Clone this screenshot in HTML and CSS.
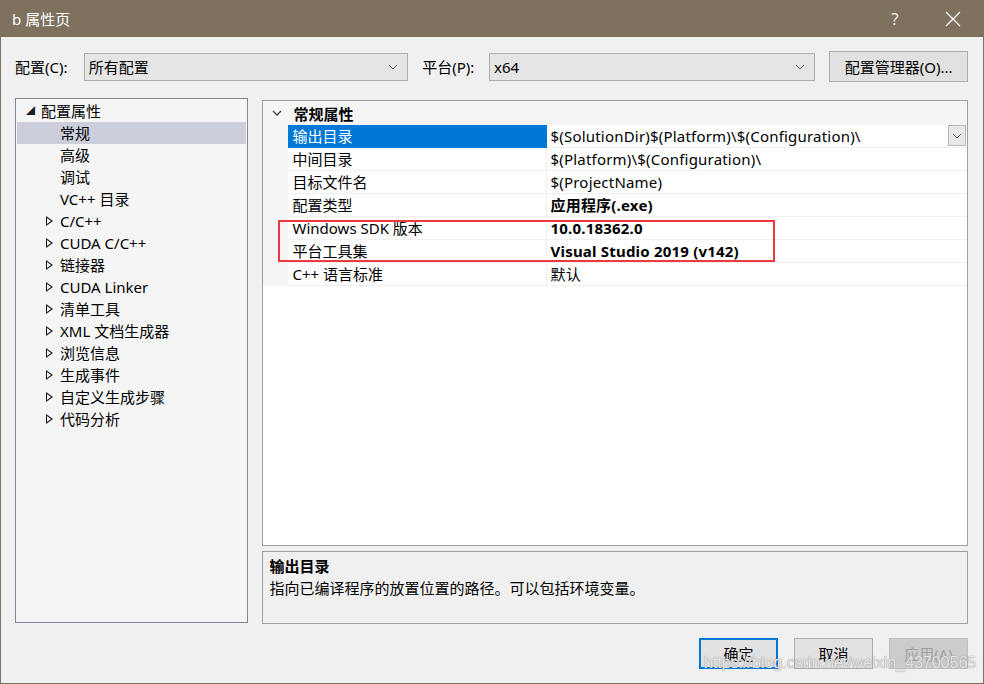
FILE: index.html
```html
<!DOCTYPE html>
<html lang="zh-CN">

<head>
    <meta charset="UTF-8">
    <meta name="viewport" content="width=device-width, initial-scale=1">
    <title>b 属性页</title>

    <link rel="stylesheet" href="styles.css">
</head>

<body>
    <div class="window">
        <div class="titlebar">
            <span class="title">b 属性页</span>
            <span class="title-btn help">?</span>
            <span class="title-btn close">
                <svg width="16" height="16" viewBox="0 0 16 16">
                    <path d="M1 1 L15 15 M15 1 L1 15" stroke="#fff" stroke-width="1.2" fill="none" />
                </svg>
            </span>
        </div>

        <div class="content">
            <div class="config-row">
                <label class="field-label">配置(C):</label>
                <div class="combo combo-config">
                    <span>所有配置</span>
                    <svg class="combo-arrow" width="10" height="6" viewBox="0 0 10 6">
                        <path d="M1 1 L5 5 L9 1" stroke="#606060" fill="none" />
                    </svg>
                </div>
                <label class="field-label platform-label">平台(P):</label>
                <div class="combo combo-platform">
                    <span>x64</span>
                    <svg class="combo-arrow" width="10" height="6" viewBox="0 0 10 6">
                        <path d="M1 1 L5 5 L9 1" stroke="#606060" fill="none" />
                    </svg>
                </div>
                <button class="btn btn-manager">配置管理器(O)...</button>
            </div>

            <div class="main">
                <div class="tree">
                    <div class="tree-item root"><span class="arrow-open">◢</span>配置属性</div>
                    <div class="tree-item leaf selected">常规</div>
                    <div class="tree-item leaf">高级</div>
                    <div class="tree-item leaf">调试</div>
                    <div class="tree-item leaf">VC++ 目录</div>
                    <div class="tree-item node"><span class="arrow-closed"></span>C/C++</div>
                    <div class="tree-item node"><span class="arrow-closed"></span>CUDA C/C++</div>
                    <div class="tree-item node"><span class="arrow-closed"></span>链接器</div>
                    <div class="tree-item node"><span class="arrow-closed"></span>CUDA Linker</div>
                    <div class="tree-item node"><span class="arrow-closed"></span>清单工具</div>
                    <div class="tree-item node"><span class="arrow-closed"></span>XML 文档生成器</div>
                    <div class="tree-item node"><span class="arrow-closed"></span>浏览信息</div>
                    <div class="tree-item node"><span class="arrow-closed"></span>生成事件</div>
                    <div class="tree-item node"><span class="arrow-closed"></span>自定义生成步骤</div>
                    <div class="tree-item node"><span class="arrow-closed"></span>代码分析</div>
                </div>

                <div class="right">
                    <div class="grid">
                        <div class="grid-header">
                            <svg class="chevron" width="10" height="6" viewBox="0 0 10 6">
                                <path d="M1 1 L5 5 L9 1" stroke="#404040" stroke-width="1.3" fill="none" />
                            </svg>
                            <span>常规属性</span>
                        </div>
                        <div class="row selected">
                            <div class="cell-name">输出目录</div>
                            <div class="cell-value">$(SolutionDir)$(Platform)\$(Configuration)\
                                <span class="row-drop">
                                    <svg width="10" height="6" viewBox="0 0 10 6">
                                        <path d="M1 1 L5 5 L9 1" stroke="#606060" fill="none" />
                                    </svg>
                                </span>
                            </div>
                        </div>
                        <div class="row">
                            <div class="cell-name">中间目录</div>
                            <div class="cell-value">$(Platform)\$(Configuration)\</div>
                        </div>
                        <div class="row">
                            <div class="cell-name">目标文件名</div>
                            <div class="cell-value">$(ProjectName)</div>
                        </div>
                        <div class="row">
                            <div class="cell-name">配置类型</div>
                            <div class="cell-value bold">应用程序(.exe)</div>
                        </div>
                        <div class="row">
                            <div class="cell-name">Windows SDK 版本</div>
                            <div class="cell-value bold">10.0.18362.0</div>
                        </div>
                        <div class="row">
                            <div class="cell-name">平台工具集</div>
                            <div class="cell-value bold">Visual Studio 2019 (v142)</div>
                        </div>
                        <div class="row">
                            <div class="cell-name">C++ 语言标准</div>
                            <div class="cell-value">默认</div>
                        </div>

                        <div class="highlight"></div>
                    </div>

                    <div class="desc">
                        <div class="desc-title">输出目录</div>
                        <div class="desc-text">指向已编译程序的放置位置的路径。可以包括环境变量。</div>
                    </div>
                </div>
            </div>

            <div class="buttons">
                <button class="btn btn-dialog default">确定</button>
                <button class="btn btn-dialog">取消</button>
                <button class="btn btn-dialog disabled">应用(A)</button>
            </div>

            <div class="watermark">https://blog.csdn.net/weixin_43700565</div>
        </div>
    </div>
</body>

</html>
```

FILE: styles.css
```css
body {
    margin: 0;
    padding: 0;
    font: 15px "Noto Sans", "Noto Sans CJK SC", sans-serif;
    color: #000;
    background: #f0f0f0;
}

.window {
    position: relative;
    width: 984px;
    height: 684px;
    box-sizing: border-box;
    border: 1px solid #7e715e;
    border-top: none;
    background: #f0f0f0;
    display: flex;
    flex-direction: column;
}

.titlebar {
    height: 37px;
    margin: 0 -1px;
    background: #7e715e;
    color: #fff;
    display: flex;
    align-items: center;
    padding-left: 12px;
    flex-shrink: 0;
}

.title {
    flex: 1;
    font-size: 15px;
    line-height: 20px;
}

.title-btn {
    width: 46px;
    display: flex;
    justify-content: center;
    align-items: center;
}

.help {
    margin-right: 12px;
    font-size: 16px;
    color: #ecebe8;
}

.close {
    margin-right: 8px;
}

.content {
    flex: 1;
    padding: 0 15px 0 14px;
    display: flex;
    flex-direction: column;
}

/* top row */

.config-row {
    display: flex;
    align-items: center;
    height: 31px;
    margin-top: 14px;
}

.field-label {
    line-height: 20px;
    width: 69px;
}

.platform-label {
    margin-left: 14px;
    width: 67px;
}

.combo {
    box-sizing: border-box;
    height: 28px;
    border: 1px solid #adadad;
    background: #e5e5e5;
    display: flex;
    align-items: center;
    padding: 0 9px 0 4px;
    line-height: 20px;
}

.combo span {
    flex: 1;
}

.combo-config {
    width: 325px;
}

.combo-platform {
    width: 327px;
}

.btn {
    font: inherit;
    color: #000;
    box-sizing: border-box;
    border: 1px solid #adadad;
    background: #e1e1e1;
    padding: 0;
    line-height: 20px;
}

.btn-manager {
    width: 139px;
    height: 31px;
    margin-left: 14px;
}

/* tree + grid */

.main {
    display: flex;
    margin-top: 16px;
}

.tree {
    box-sizing: border-box;
    width: 233px;
    height: 525px;
    border: 1px solid #828790;
    background: #f5f5f5;
    padding: 1px;
}

.tree-item {
    height: 22px;
    line-height: 22px;
    position: relative;
    white-space: nowrap;
}

.tree-item.root {
    padding-left: 24px;
}

.tree-item.leaf,
.tree-item.node {
    padding-left: 43px;
}

.tree-item.selected {
    background: #cccedb;
}

.arrow-open {
    position: absolute;
    left: 9px;
    top: 0;
    font-size: 9px;
    color: #1e1e1e;
}

.arrow-closed {
    position: absolute;
    left: 29px;
    top: 6px;
    width: 0;
    height: 0;
    border-left: 7px solid #1e1e1e;
    border-top: 5px solid transparent;
    border-bottom: 5px solid transparent;
}

.arrow-closed::after {
    content: "";
    position: absolute;
    left: -6px;
    top: -3px;
    border-left: 4px solid #f5f5f5;
    border-top: 3px solid transparent;
    border-bottom: 3px solid transparent;
}

.right {
    margin-left: 14px;
    margin-top: 2px;
    width: 708px;
    display: flex;
    flex-direction: column;
}

.grid {
    position: relative;
    box-sizing: border-box;
    height: 446px;
    border: 1px solid #a0a0a0;
    background: #fff;
}

.grid-header {
    height: 24px;
    display: flex;
    align-items: center;
    background: #f5f5f5;
    font-weight: bold;
}

.chevron {
    margin: 0 12px 0 9px;
}

.row {
    display: flex;
    height: 23px;
    line-height: 22px;
    padding-left: 25px;
    background: #f5f5f5;
}

.cell-name {
    width: 259px;
    padding-left: 5px;
    background: #fff;
    border-bottom: 1px solid #f0f0f0;
    border-right: 1px solid #f0f0f0;
    box-sizing: border-box;
    white-space: nowrap;
}

.cell-value {
    flex: 1;
    position: relative;
    padding-left: 4px;
    background: #fff;
    border-bottom: 1px solid #f0f0f0;
    white-space: nowrap;
    letter-spacing: 0.2px;
}

.row.selected .cell-name {
    background: #0078d7;
    color: #fff;
    border-color: #0078d7;
}

.bold {
    font-weight: bold;
}

.row-drop {
    position: absolute;
    right: 1px;
    top: 0;
    width: 18px;
    height: 21px;
    box-sizing: border-box;
    border: 1px solid #b8b8b8;
    background: #e8e8e8;
    display: flex;
    align-items: center;
    justify-content: center;
}

.highlight {
    position: absolute;
    left: 15px;
    top: 119px;
    width: 497px;
    height: 42px;
    box-sizing: border-box;
    border: 2px solid #ee3a3c;
}

.desc {
    box-sizing: border-box;
    height: 73px;
    margin-top: 5px;
    border: 1px solid #a0a0a0;
    background: #f0f0f0;
    padding: 3px 7px;
    line-height: 22px;
}

.desc-title {
    font-weight: bold;
}

/* dialog buttons */

.buttons {
    display: flex;
    justify-content: flex-end;
    gap: 16px;
    margin-top: 14px;
}

.btn-dialog {
    width: 79px;
    height: 31px;
}

.btn-dialog.default {
    border: 2px solid #0078d7;
}

.btn-dialog.disabled {
    background: #cccccc;
    border-color: #bfbfbf;
    color: #a0a0a0;
}

.watermark {
    position: absolute;
    left: 703px;
    top: 654px;
    font: 16px "Liberation Sans", sans-serif;
    color: rgba(255, 255, 255, 0.75);
    text-shadow: 0 0 1px #9a9a9a, 0 0 1px #9a9a9a;
    pointer-events: none;
}
```
